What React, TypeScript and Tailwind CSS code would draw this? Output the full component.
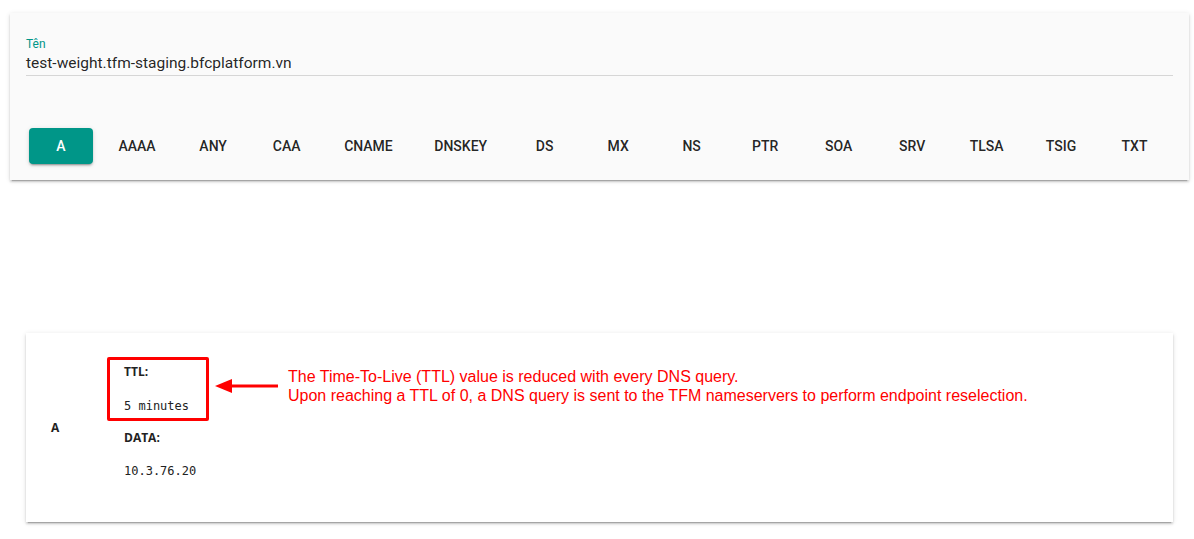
import React from "react";

const types = ["A","AAAA","ANY","CAA","CNAME","DNSKEY","DS","MX","NS","PTR","SOA","SRV","TLSA","TSIG","TXT"];

export default function App() {
  return (
    <div className="min-h-[539px] bg-white pl-[10px] pr-[5px] pt-[13px]" style={{ fontFamily: "Roboto, 'Noto Sans', sans-serif" }}>
      <div className="bg-[#fafafa] px-4 pt-[24px] pb-4 shadow-[0_3px_1px_-2px_rgba(0,0,0,0.2),0_2px_2px_0_rgba(0,0,0,0.14),0_1px_5px_0_rgba(0,0,0,0.12)]">
        <div className="text-[12px] leading-[14px] text-[#009688]">Tên</div>
        <div className="mt-[2px] border-b border-[#d6d6d6] pb-[2px] text-[15.5px] leading-[20px] text-[#000000de]">
          test-weight.tfm-staging.bfcplatform.vn
        </div>
        <div className="mt-[52px] flex gap-[9.5px] pl-[3px]">
          {types.map((t, i) =>
            i === 0 ? (
              <div
                key={t}
                className="flex h-9 min-w-16 items-center justify-center rounded-[4px] bg-[#009688] px-4 text-[14px] font-medium text-white shadow-[0_3px_1px_-2px_rgba(0,0,0,0.2),0_2px_2px_0_rgba(0,0,0,0.14),0_1px_5px_0_rgba(0,0,0,0.12)]"
              >
                {t}
              </div>
            ) : (
              <div
                key={t}
                className="flex h-9 min-w-16 items-center justify-center rounded-[4px] px-4 text-[14px] font-medium text-[#000000de]"
              >
                {t}
              </div>
            )
          )}
        </div>
      </div>

      <div className="px-4 pt-[153px]">
        <div className="relative flex h-[189px] items-center bg-white pl-[25px] shadow-[0_3px_1px_-2px_rgba(0,0,0,0.2),0_2px_2px_0_rgba(0,0,0,0.14),0_1px_5px_0_rgba(0,0,0,0.12)]">
          <div className="w-[73px] text-[12px] font-bold leading-[16px] text-[#222]" style={{ fontFamily: "'Open Sans', sans-serif" }}>
            A
          </div>
          <div className="flex flex-col self-start pt-[31px] text-[#222]">
            <div className="text-[12px] font-bold leading-[16px]" style={{ fontFamily: "'Open Sans', sans-serif" }}>TTL:</div>
            <div className="mt-[18px] text-[12px] leading-[16px]" style={{ fontFamily: "'DejaVu Sans Mono', monospace" }}>5 minutes</div>
            <div className="mt-[16px] text-[12px] font-bold leading-[16px]" style={{ fontFamily: "'Open Sans', sans-serif" }}>DATA:</div>
            <div className="mt-[17px] text-[12px] leading-[16px]" style={{ fontFamily: "'DejaVu Sans Mono', monospace" }}>10.3.76.20</div>
          </div>

          <div className="absolute left-[81px] top-[24px] h-[64px] w-[102px] rounded-[2px] border-[3px] border-[#ff0000]" />
          <svg className="absolute left-[188px] top-[45px]" width="92" height="16" viewBox="0 0 92 16">
            <line x1="14" y1="8" x2="64" y2="8" stroke="#ff0000" strokeWidth="3" />
            <polygon points="1,8 18,1 18,15" fill="#ff0000" />
          </svg>
          <div
            className="absolute left-[262px] top-[34px] text-[16px] leading-[19px] text-[#ff0000]"
            style={{ fontFamily: "'Liberation Sans', Arial, sans-serif" }}
          >
            <div>The Time-To-Live (TTL) value is reduced with every DNS query.</div>
            <div>Upon reaching a TTL of 0, a DNS query is sent to the TFM nameservers to perform endpoint reselection.</div>
          </div>
        </div>
      </div>
    </div>
  );
}
